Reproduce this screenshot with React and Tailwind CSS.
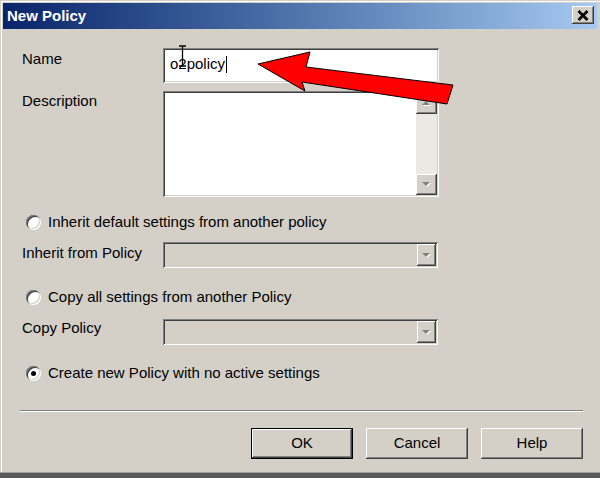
import React from "react";

const sunken =
  "shadow-[inset_1px_1px_0_#808080,inset_-1px_-1px_0_#ffffff,inset_2px_2px_0_#404040,inset_-2px_-2px_0_#d4d0c8]";
const raised =
  "shadow-[inset_-1px_-1px_0_#404040,inset_1px_1px_0_#ffffff,inset_-2px_-2px_0_#808080,inset_2px_2px_0_#d4d0c8]";

function Arrow({ down }) {
  return (
    <svg width="11" height="7" viewBox="0 0 11 7">
      {down ? (
        <>
          <polygon points="2,2 10,2 6,6" fill="#ffffff" />
          <polygon points="1,1 9,1 5,5" fill="#808080" />
        </>
      ) : (
        <>
          <polygon points="2,6 10,6 6,2" fill="#ffffff" />
          <polygon points="1,5 9,5 5,1" fill="#808080" />
        </>
      )}
    </svg>
  );
}

function ScrollButton({ down }) {
  return (
    <div className={`w-[21px] h-[21px] bg-[#d4d0c8] flex items-center justify-center ${raised}`}>
      <Arrow down={down} />
    </div>
  );
}

function Radio({ checked, label }) {
  return (
    <div className="flex items-center h-[20px]">
      <div className="ml-[4px] w-[15px] h-[15px] rounded-full bg-white shadow-[inset_1px_1px_0_#808080,inset_-1px_-1px_0_#ffffff,inset_2px_2px_0_#404040,inset_-2px_-2px_0_#d4d0c8] flex items-center justify-center">
        {checked && <div className="w-[5px] h-[5px] rounded-full bg-black" />}
      </div>
      <span className="ml-[7px]">{label}</span>
    </div>
  );
}

function Select() {
  return (
    <div className={`w-[275px] h-[26px] bg-[#d4d0c8] p-[2px] flex justify-end ${sunken}`}>
      <div className={`w-[19px] h-full flex items-center justify-center ${raised}`}>
        <Arrow down />
      </div>
    </div>
  );
}

function Button({ children, isDefault }) {
  return (
    <div
      className={`w-[102px] h-[31px] flex items-center justify-center bg-[#d4d0c8] ${
        isDefault ? "border border-black" : ""
      } ${raised}`}
    >
      {children}
    </div>
  );
}

export default function App() {
  return (
    <div
      className="relative w-[600px] h-[478px] bg-[#d4d0c8] overflow-hidden flex flex-col pt-[3px] px-[3px] text-[15px] text-black shadow-[inset_1px_1px_0_#d4d0c8,inset_2px_2px_0_#ffffff]"
      style={{ fontFamily: '"Liberation Sans", Arial, sans-serif' }}
    >
      {/* title bar */}
      <div className="h-[26px] flex items-center justify-between pl-[4px] pr-[3px] bg-linear-to-r from-[#0a246a] to-[#a6caf0]">
        <span className="text-white font-bold text-[15px]">New Policy</span>
        <div className={`w-[22px] h-[18px] -mt-[2px] bg-[#d4d0c8] flex items-center justify-center ${raised}`}>
          <svg width="12" height="11" viewBox="0 0 12 11">
            <path d="M1.5 1 L10.5 10 M10.5 1 L1.5 10" stroke="#000" strokeWidth="2.8" />
          </svg>
        </div>
      </div>

      {/* body */}
      <div className="flex-1 flex flex-col pl-[19px] pr-[14px] pt-[19px]">
        <div className="flex items-start">
          <span className="w-[141px]">Name</span>
          <div className={`w-[276px] h-[35px] bg-white flex items-center pl-[7px] pb-[3px] ${sunken}`}>
            <span>o2policy</span>
            <span className="ml-[1px] w-px h-[17px] bg-black" />
          </div>
        </div>

        <div className="flex items-start mt-[8px]">
          <span className="w-[141px] -mt-[1px]">Description</span>
          <div className={`w-[276px] h-[106px] bg-white p-[2px] flex justify-end ${sunken}`}>
            <div className="w-[21px] h-full flex flex-col bg-[#ebe9e4]">
              <ScrollButton />
              <div className="flex-1" />
              <ScrollButton down />
            </div>
          </div>
        </div>

        <div className="mt-[15px]">
          <Radio label="Inherit default settings from another policy" />
        </div>

        <div className="flex items-center mt-[10px]">
          <span className="w-[141px] -mt-[4px]">Inherit from Policy</span>
          <Select />
        </div>

        <div className="mt-[19px]">
          <Radio label="Copy all settings from another Policy" />
        </div>

        <div className="flex items-center mt-[12px]">
          <span className="w-[141px] -mt-[7px]">Copy Policy</span>
          <Select />
        </div>

        <div className="mt-[18px]">
          <Radio checked label="Create new Policy with no active settings" />
        </div>

        <div className="mt-[27px] -ml-[2px] h-[2px] border-t border-[#808080] border-b border-b-white" />

        <div className="mt-[16px] flex justify-end gap-[13px]">
          <Button isDefault>OK</Button>
          <Button>Cancel</Button>
          <Button>Help</Button>
        </div>
      </div>

      {/* bottom frame */}
      <div className="-mx-[3px] h-[6px] bg-[#5a5a5a] border-t border-[#a0a0a0]" />

      {/* annotation overlays */}
      <svg className="absolute left-0 top-0 pointer-events-none" width="600" height="478">
        <path d="M179 46 H186 M182.5 46 V66 M179 66 H186" stroke="#000" strokeWidth="1.3" fill="none" />
        <polygon
          points="258,64 310,52 306,67 453,85 447,104 302,82 305,91"
          fill="#ff0000"
          stroke="#000"
          strokeWidth="1"
          strokeLinejoin="miter"
        />
      </svg>
    </div>
  );
}
